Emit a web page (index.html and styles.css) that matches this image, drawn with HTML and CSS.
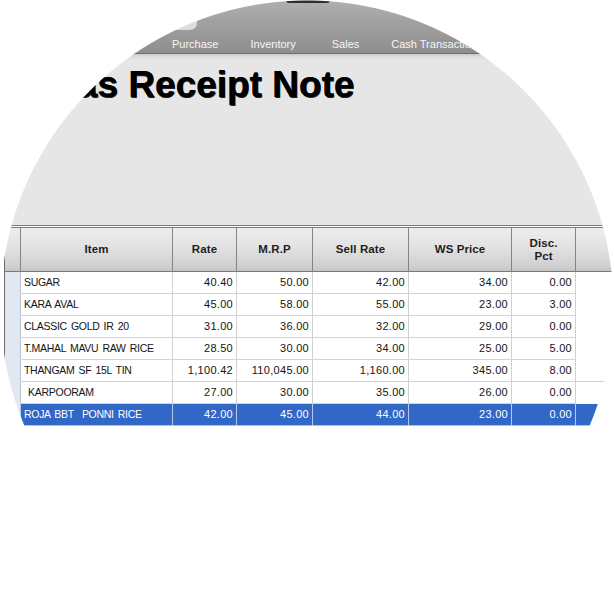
FILE: index.html
```html
<!DOCTYPE html>
<html>
<head>
<meta charset="utf-8">
<link rel="stylesheet" href="styles.css">
</head>
<body>
<div class="lens">
  <div class="toolbar">
    <span class="logo-tab"></span>
    <span class="logo-knob"></span>
    <nav class="menu">
      <span class="menu-item">Purchase</span>
      <span class="menu-item">Inventory</span>
      <span class="menu-item">Sales</span>
      <span class="menu-item">Cash Transaction</span>
    </nav>
  </div>
  <div class="head">
    <h1 class="title">as Receipt Note</h1>
  </div>
  <div class="grid">
    <div class="row hdr">
      <div class="c ind"></div>
      <div class="c">Item</div>
      <div class="c">Rate</div>
      <div class="c">M.R.P</div>
      <div class="c">Sell Rate</div>
      <div class="c">WS Price</div>
      <div class="c">Disc.<br>Pct</div>
      <div class="c fill"></div>
    </div>
    <div class="row">
      <div class="c ind"></div>
      <div class="c txt">SUGAR</div>
      <div class="c num">40.40</div>
      <div class="c num">50.00</div>
      <div class="c num">42.00</div>
      <div class="c num">34.00</div>
      <div class="c num">0.00</div>
      <div class="c fill"></div>
    </div>
    <div class="row">
      <div class="c ind"></div>
      <div class="c txt">KARA AVAL</div>
      <div class="c num">45.00</div>
      <div class="c num">58.00</div>
      <div class="c num">55.00</div>
      <div class="c num">23.00</div>
      <div class="c num">3.00</div>
      <div class="c fill"></div>
    </div>
    <div class="row">
      <div class="c ind"></div>
      <div class="c txt">CLASSIC GOLD IR 20</div>
      <div class="c num">31.00</div>
      <div class="c num">36.00</div>
      <div class="c num">32.00</div>
      <div class="c num">29.00</div>
      <div class="c num">0.00</div>
      <div class="c fill"></div>
    </div>
    <div class="row">
      <div class="c ind"></div>
      <div class="c txt">T.MAHAL MAVU RAW RICE</div>
      <div class="c num">28.50</div>
      <div class="c num">30.00</div>
      <div class="c num">34.00</div>
      <div class="c num">25.00</div>
      <div class="c num">5.00</div>
      <div class="c fill"></div>
    </div>
    <div class="row">
      <div class="c ind"></div>
      <div class="c txt">THANGAM SF 15L TIN</div>
      <div class="c num">1,100.42</div>
      <div class="c num">110,045.00</div>
      <div class="c num">1,160.00</div>
      <div class="c num">345.00</div>
      <div class="c num">8.00</div>
      <div class="c fill lined"></div>
    </div>
    <div class="row">
      <div class="c ind"></div>
      <div class="c txt">&nbsp;KARPOORAM</div>
      <div class="c num">27.00</div>
      <div class="c num">30.00</div>
      <div class="c num">35.00</div>
      <div class="c num">26.00</div>
      <div class="c num">0.00</div>
      <div class="c fill"></div>
    </div>
    <div class="row sel">
      <div class="c ind"></div>
      <div class="c txt">ROJA BBT &nbsp;PONNI RICE</div>
      <div class="c num">42.00</div>
      <div class="c num">45.00</div>
      <div class="c num">44.00</div>
      <div class="c num">23.00</div>
      <div class="c num">0.00</div>
      <div class="c fill"></div>
    </div>
  </div>
  <div class="mask"></div>
</div>
</body>
</html>
```
FILE: styles.css
```css
html, body {
  margin: 0;
  padding: 0;
  background: #ffffff;
}

.lens {
  position: relative;
  width: 614px;
  height: 614px;
  overflow: hidden;
  background: #ffffff;
  font-family: "Liberation Sans", Arial, sans-serif;
}

.mask {
  position: absolute;
  left: 0;
  top: 0;
  width: 614px;
  height: 614px;
  background: radial-gradient(circle 307px at 307px 307px, rgba(255, 255, 255, 0) 306px, #ffffff 307px);
}

.toolbar {
  position: relative;
  height: 53px;
  border-bottom: 1px solid #6f6f6f;
  background: linear-gradient(#b0b0b0 0, #a2a2a2 20px, #8e8e8e 53px);
}

.logo-tab {
  position: absolute;
  left: 110px;
  top: 0;
  width: 87px;
  height: 30px;
  border-radius: 0 0 7px 0;
  background: linear-gradient(#f2f2f2, #d9d9d9);
}

.logo-knob {
  position: absolute;
  left: 286px;
  top: 0;
  width: 44px;
  height: 3px;
  border-radius: 0 0 22px 22px;
  background: #2e2e2e;
}

.menu {
  display: flex;
  padding: 36px 0 0 155px;
}

.menu-item {
  padding: 0 17px;
  font-size: 11px;
  line-height: 16px;
  color: #f6f6f6;
  white-space: nowrap;
}

.menu-item:first-child {
  padding-right: 15px;
}

.menu-item:nth-child(2) {
  padding-right: 19px;
}

.menu-item:nth-child(3) {
  padding-right: 15px;
}

.head {
  height: 171px;
  background: linear-gradient(#c9c9c9 0, #dedede 3px, #e6e6e6 7px, #e6e6e6 100%);
}

.title {
  margin: 0;
  padding: 10px 0 0 77px;
  font-size: 37px;
  line-height: 42px;
  font-weight: bold;
  color: #000000;
  text-shadow: 0.6px 0.6px 0 #222, -0.3px 0 0 #222;
  white-space: nowrap;
}

.grid {
  width: 640px;
  margin-left: 4px;
  border-top: 3px double #7b7b7b;
  border-left: 1px solid #6b6b6b;
  background: #ffffff;
}

.row {
  display: grid;
  grid-template-columns: 16px 152px 64px 76px 96px 103px 64px 1fr;
  height: 22px;
}

.c {
  box-sizing: border-box;
  border-right: 1px solid #d0d0d0;
  border-bottom: 1px solid #d3d3d3;
  font-size: 11px;
  line-height: 21px;
  color: #141414;
  white-space: nowrap;
}

.txt {
  padding-left: 3px;
  font-size: 10.5px;
  letter-spacing: -0.3px;
  word-spacing: 1.5px;
}

.num {
  text-align: right;
  padding-right: 3px;
  letter-spacing: 0.3px;
}

.ind {
  background: #e2e8f2;
  border-right-color: #b9c3d3;
  border-bottom-color: #e6ebf3;
}

.fill {
  border-right: none;
  border-bottom-color: transparent;
}

.fill.lined {
  border-bottom-color: #d0d0d0;
}

.hdr {
  height: 44px;
}

.hdr .c {
  display: flex;
  align-items: center;
  justify-content: center;
  text-align: center;
  font-size: 11.5px;
  line-height: 13px;
  font-weight: bold;
  letter-spacing: 0.1px;
  color: #1e1e1e;
  background: linear-gradient(#ededed 0, #e2e2e2 45%, #cfcfcf 90%, #c4c4c4 100%);
  border-right: 1px solid #858585;
  border-bottom: 1px solid #7b7b7b;
}

.hdr .fill {
  border-right: none;
}

.sel .c {
  background: #3167c6;
  color: #ffffff;
  border-right-color: #b7c9ea;
  border-bottom-color: #a9c0ea;
}

.sel .ind {
  background: #e2e8f2;
}
```
